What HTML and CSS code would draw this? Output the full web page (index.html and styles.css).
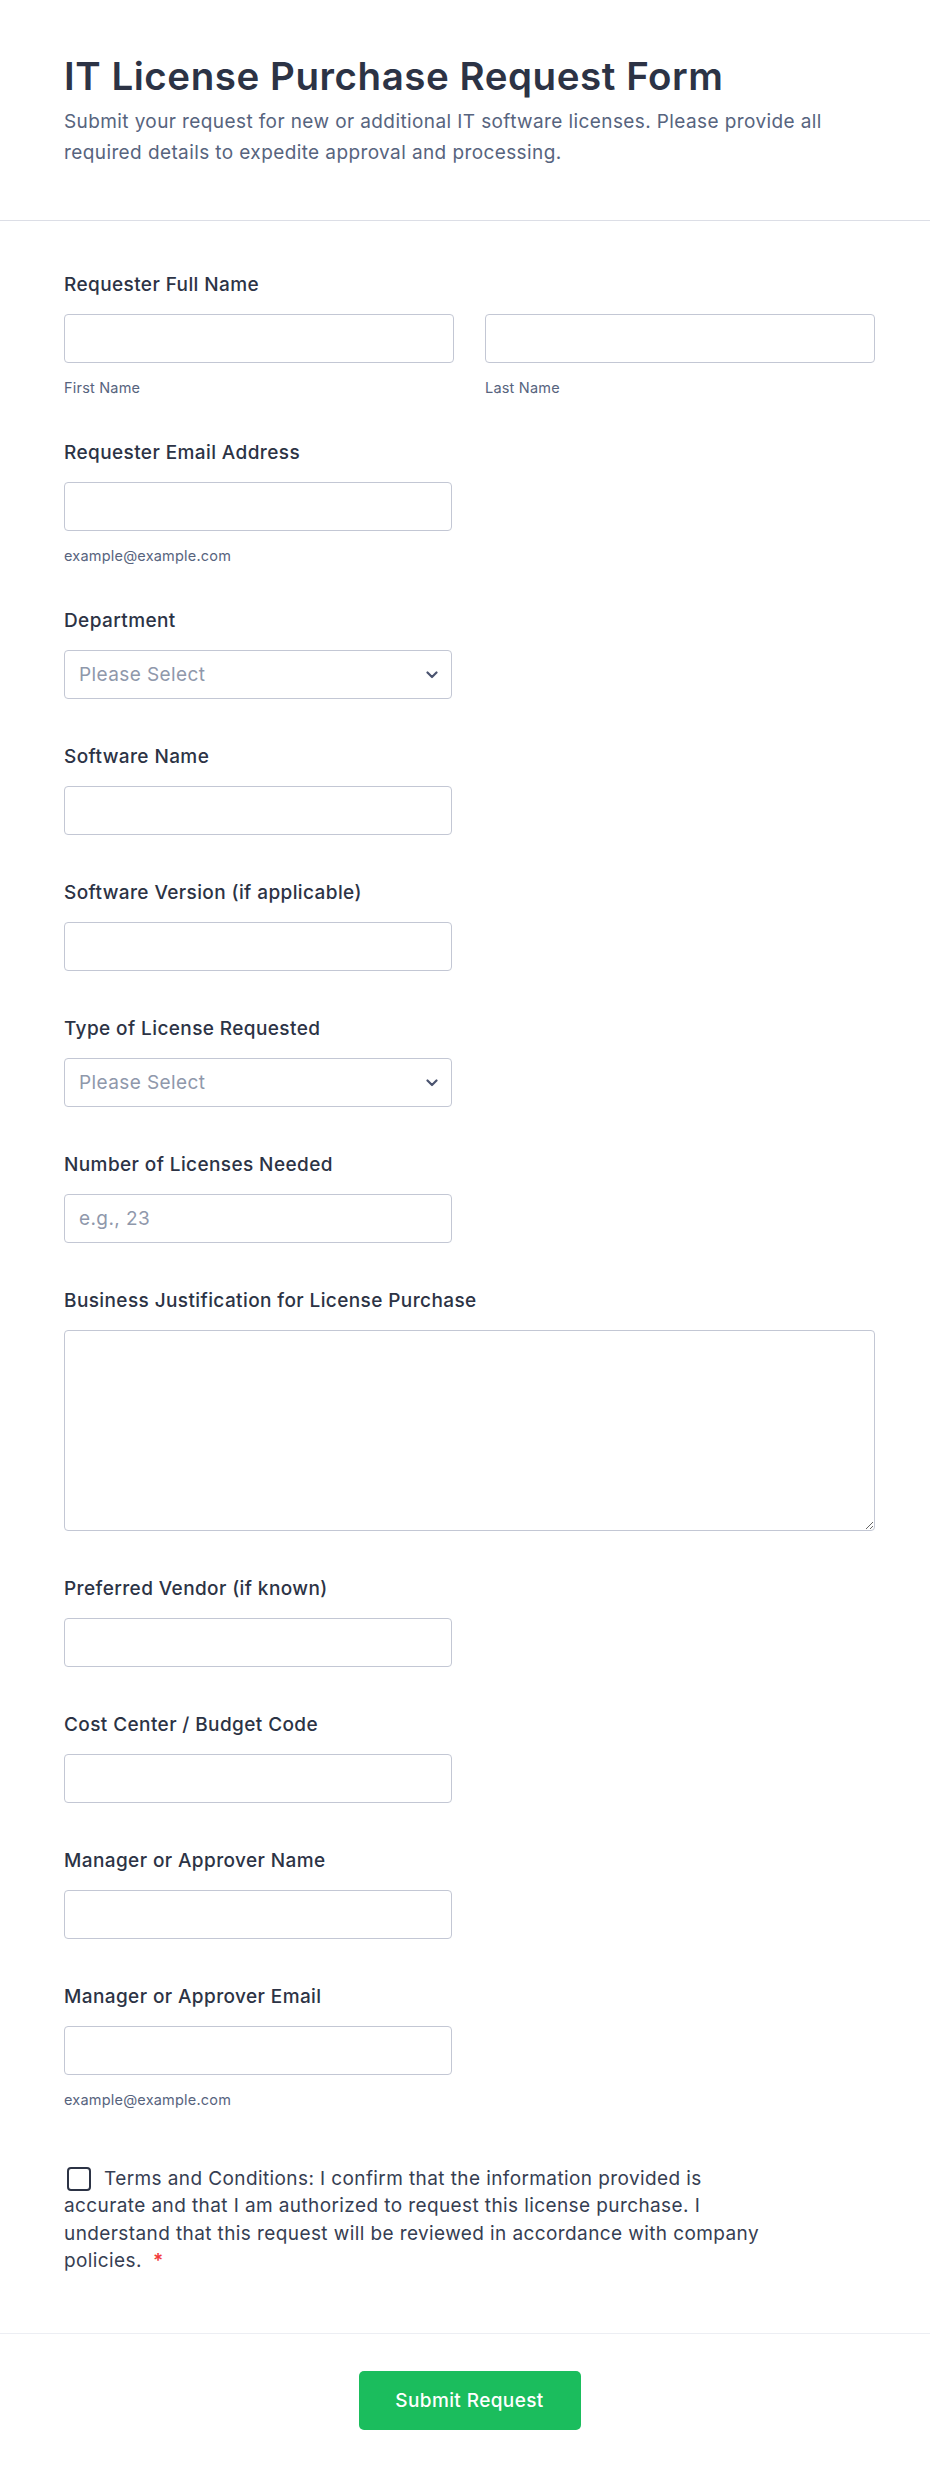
FILE: index.html
```html
<!DOCTYPE html>
<html lang="en">
<head>
<meta charset="utf-8">
<title>IT License Purchase Request Form</title>
<link rel="stylesheet" href="styles.css">
</head>
<body>
<div class="page">
  <header class="header">
    <h1 class="title">IT License Purchase Request Form</h1>
    <p class="subtitle">Submit your request for new or additional IT software licenses. Please provide all required details to expedite approval and processing.</p>
  </header>

  <form class="form">
    <div class="field">
      <div class="label">Requester Full Name</div>
      <div class="name-row">
        <div class="name-col">
          <input class="input full" type="text">
          <div class="sublabel">First Name</div>
        </div>
        <div class="name-col">
          <input class="input full" type="text">
          <div class="sublabel">Last Name</div>
        </div>
      </div>
    </div>

    <div class="field">
      <div class="label">Requester Email Address</div>
      <input class="input" type="email">
      <div class="sublabel">example@example.com</div>
    </div>

    <div class="field">
      <div class="label">Department</div>
      <div class="select">
        <span class="select-text">Please Select</span>
        <svg class="chevron" width="12" height="8" viewBox="0 0 12 8"><path d="M1.5 1.5 L6 6 L10.5 1.5" fill="none" stroke="#4b5470" stroke-width="2.2" stroke-linecap="round" stroke-linejoin="round"/></svg>
      </div>
    </div>

    <div class="field">
      <div class="label">Software Name</div>
      <input class="input" type="text">
    </div>

    <div class="field">
      <div class="label">Software Version (if applicable)</div>
      <input class="input" type="text">
    </div>

    <div class="field">
      <div class="label">Type of License Requested</div>
      <div class="select">
        <span class="select-text">Please Select</span>
        <svg class="chevron" width="12" height="8" viewBox="0 0 12 8"><path d="M1.5 1.5 L6 6 L10.5 1.5" fill="none" stroke="#4b5470" stroke-width="2.2" stroke-linecap="round" stroke-linejoin="round"/></svg>
      </div>
    </div>

    <div class="field">
      <div class="label">Number of Licenses Needed</div>
      <input class="input" type="text" placeholder="e.g., 23">
    </div>

    <div class="field">
      <div class="label">Business Justification for License Purchase</div>
      <textarea class="textarea"></textarea>
    </div>

    <div class="field">
      <div class="label">Preferred Vendor (if known)</div>
      <input class="input" type="text">
    </div>

    <div class="field">
      <div class="label">Cost Center / Budget Code</div>
      <input class="input" type="text">
    </div>

    <div class="field">
      <div class="label">Manager or Approver Name</div>
      <input class="input" type="text">
    </div>

    <div class="field">
      <div class="label">Manager or Approver Email</div>
      <input class="input" type="email">
      <div class="sublabel">example@example.com</div>
    </div>

    <div class="terms">
      <span class="checkbox"></span><span class="terms-text">Terms and Conditions: I confirm that the information provided is accurate and that I am authorized to request this license purchase. I understand that this request will be reviewed in accordance with company policies.</span><span class="required">*</span>
    </div>
  </form>

  <footer class="footer">
    <button class="submit" type="button">Submit Request</button>
  </footer>
</div>
</body>
</html>
```

FILE: styles.css
```css
* {
  box-sizing: border-box;
}

html, body {
  margin: 0;
  padding: 0;
  background: #ffffff;
}

body {
  font-family: Inter, "Noto Sans", "Liberation Sans", sans-serif;
  color: #2c3345;
  letter-spacing: 0.4px;
}

.page {
  width: 930px;
}

.header {
  padding: 54px 55px 52px 64px;
  border-bottom: 1px solid #dcdee6;
}

.title {
  margin: 0;
  font-size: 38.5px;
  line-height: 45px;
  font-weight: 600;
  letter-spacing: 0.55px;
  color: #2c3345;
}

.subtitle {
  margin: 8px 0 0 0;
  font-size: 19px;
  line-height: 30.5px;
  font-weight: 400;
  color: #57647e;
}

.form {
  padding: 51px 55px 58px 64px;
  display: flex;
  flex-direction: column;
}

.field {
  display: flex;
  flex-direction: column;
  align-items: flex-start;
  margin-bottom: 45px;
}

.label {
  font-size: 19px;
  line-height: 26px;
  font-weight: 500;
  color: #2c3345;
  margin-bottom: 16px;
}

.name-row {
  display: grid;
  grid-template-columns: 1fr 1fr;
  column-gap: 31px;
  width: 100%;
}

.name-col {
  display: flex;
  flex-direction: column;
}

.input {
  width: 388px;
  height: 49px;
  border: 1px solid #c3c7d4;
  border-radius: 4px;
  background: #ffffff;
  padding: 0 14px;
  font-family: Inter, "Noto Sans", sans-serif;
  font-size: 19px;
  letter-spacing: 0.4px;
  color: #2c3345;
  outline: none;
  margin: 0;
}

.input.full {
  width: 100%;
}

.input::placeholder {
  color: #8f98ab;
}

.sublabel {
  margin-top: 16px;
  font-size: 14.5px;
  line-height: 18px;
  letter-spacing: 0.2px;
  color: #57647e;
  margin-bottom: -2px;
}

.select {
  width: 388px;
  height: 49px;
  border: 1px solid #c3c7d4;
  border-radius: 4px;
  background: #ffffff;
  padding: 0 13px 0 14px;
  display: flex;
  align-items: center;
  justify-content: space-between;
}

.select-text {
  font-size: 19px;
  color: #8f98ab;
}

.chevron {
  display: block;
}

.textarea {
  width: 100%;
  height: 201px;
  border: 1px solid #c3c7d4;
  border-radius: 4px;
  background: #ffffff;
  padding: 12px 14px;
  font-family: Inter, "Noto Sans", sans-serif;
  font-size: 19px;
  margin: 0;
  outline: none;
  display: block;
}

.terms {
  margin-top: 13px;
  width: 708px;
  font-size: 19px;
  line-height: 27.4px;
  color: #363e52;
}

.checkbox {
  display: inline-block;
  width: 24px;
  height: 24px;
  border: 2px solid #2c3345;
  border-radius: 4px;
  vertical-align: -6px;
  margin: 0 13px 0 3px;
}

.required {
  color: #f23a3c;
  margin-left: 11px;
  font-weight: 600;
}

.footer {
  border-top: 1px solid #eceef3;
  padding: 37px 55px 50px 64px;
  display: flex;
  justify-content: center;
}

.submit {
  width: 222px;
  height: 59px;
  border: none;
  border-radius: 5px;
  background: #1bbd5d;
  color: #ffffff;
  font-family: Inter, "Noto Sans", sans-serif;
  font-size: 19px;
  letter-spacing: 0.4px;
  font-weight: 500;
  cursor: pointer;
}
```
